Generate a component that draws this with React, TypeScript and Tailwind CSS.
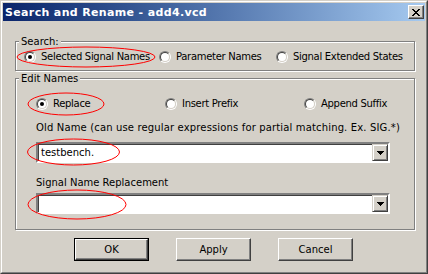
import React from 'react';

const font = { fontFamily: '"DejaVu Sans", Tahoma, sans-serif' };

const Radio = ({ checked = false }: { checked?: boolean }) => (
  <span className="w-[12px] h-[12px] shrink-0 rounded-full border border-t-[#808080] border-l-[#808080] border-r-white border-b-white flex">
    <span className="flex-1 rounded-full border border-t-[#404040] border-l-[#404040] border-r-[#d4d0c8] border-b-[#d4d0c8] bg-white flex items-center justify-center">
      {checked && <span className="w-[4px] h-[4px] rounded-full bg-black" />}
    </span>
  </span>
);

const RadioItem = ({ label, checked, className }: { label: string; checked?: boolean; className: string }) => (
  <div className={`flex items-center gap-[5px] h-[13px] ${className}`}>
    <Radio checked={checked} />
    <span className="leading-[13px] whitespace-nowrap tracking-[-0.3px]">{label}</span>
  </div>
);

const Combo = ({ value }: { value: string }) => (
  <div className="w-[354px] h-[21px] flex border-2 border-t-[#808080] border-l-[#808080] border-r-white border-b-white bg-white">
    <div className="flex-1 flex shadow-[inset_1px_1px_0_#404040]">
      <div className="flex-1 flex items-center pl-[3px] leading-[13px]">{value}</div>
      <div className="w-[16px] flex items-center justify-center bg-[#d4d0c8] border border-t-[#d4d0c8] border-l-[#d4d0c8] border-r-[#404040] border-b-[#404040] shadow-[inset_1px_1px_0_#fff,inset_-1px_-1px_0_#808080]">
        <svg width="7" height="4" viewBox="0 0 7 4">
          <path d="M0 0h7v1h-1v1h-1v1h-1v1h-1v-1h-1v-1h-1v-1h-1z" fill="#000" />
        </svg>
      </div>
    </div>
  </div>
);

const Button = ({ label, isDefault }: { label: string; isDefault?: boolean }) => (
  <button
    className={`w-[75px] h-[23px] flex ${isDefault ? 'border border-black' : ''}`}
  >
    <span className="flex-1 flex items-center justify-center bg-[#d4d0c8] border border-t-white border-l-white border-r-[#404040] border-b-[#404040] shadow-[inset_-1px_-1px_0_#808080] leading-[13px]">
      {label}
    </span>
  </button>
);

const Legend = ({ text }: { text: string }) => (
  <span className="self-start ml-[3px] -mt-[7px] px-[2px] h-[13px] leading-[13px] bg-[#d4d0c8]">{text}</span>
);

const App = () => {
  return (
    <div style={font} className="w-[428px] h-[274px] relative text-[10px] text-black select-none">
      <div className="w-full h-full flex border border-t-[#d4d0c8] border-l-[#d4d0c8] border-r-[#404040] border-b-[#404040]">
        <div className="flex-1 flex flex-col p-[1px] bg-[#d4d0c8] border border-t-white border-l-white border-r-[#808080] border-b-[#808080]">
          {/* title bar */}
          <div className="h-[18px] flex items-center justify-between pl-[2px] pr-[1px] bg-linear-to-r from-[#0a246a] to-[#a6caf0]">
            <span className="text-white font-bold text-[11px] leading-[13px] tracking-[0.35px]">Search and Rename - add4.vcd</span>
            <div className="w-[16px] h-[14px] flex bg-[#d4d0c8] border border-t-white border-l-white border-r-[#404040] border-b-[#404040]">
              <div className="flex-1 flex items-center justify-center shadow-[inset_-1px_-1px_0_#808080]">
                <svg width="8" height="7" viewBox="0 0 8 7">
                  <path
                    d="M0 0h2v1h1v1h2v-1h1v-1h2v1h-1v1h-1v1h-1v1h1v1h1v1h1v1h-2v-1h-1v-1h-2v1h-1v1h-2v-1h1v-1h1v-1h1v-1h-1v-1h-1v-1h-1z"
                    fill="#000"
                  />
                </svg>
              </div>
            </div>
          </div>

          {/* body */}
          <div className="flex flex-col pl-[12px]">
            <div className="mt-[20px] w-[400px] h-[30px] flex flex-col border border-[#808080] shadow-[inset_1px_1px_0_#fff,1px_1px_0_#fff]">
              <Legend text="Search:" />
              <div className="mt-[2px] flex pl-[8px]">
                <RadioItem label="Selected Signal Names" checked className="w-[135px]" />
                <RadioItem label="Parameter Names" className="w-[117px]" />
                <RadioItem label="Signal Extended States" className="" />
              </div>
            </div>

            <div className="mt-[7px] w-[400px] h-[152px] flex flex-col border border-[#808080] shadow-[inset_1px_1px_0_#fff,1px_1px_0_#fff]">
              <Legend text="Edit Names" />
              <div className="mt-[12px] flex pl-[20px]">
                <RadioItem label="Replace" checked className="w-[129px]" />
                <RadioItem label="Insert Prefix" className="w-[139px]" />
                <RadioItem label="Append Suffix" className="" />
              </div>
              <div className="mt-[11px] pl-[20px] h-[13px] leading-[13px] whitespace-nowrap tracking-[0.15px]">
                Old Name (can use regular expressions for partial matching. Ex. SIG.*)
              </div>
              <div className="mt-[8px] pl-[20px]">
                <Combo value="testbench." />
              </div>
              <div className="mt-[13px] pl-[20px] h-[13px] leading-[13px]">Signal Name Replacement</div>
              <div className="mt-[4px] pl-[20px]">
                <Combo value="" />
              </div>
            </div>
          </div>

          <div className="mt-[8px] flex justify-center gap-[27px] pr-[1px]">
            <Button label="OK" isDefault />
            <Button label="Apply" />
            <Button label="Cancel" />
          </div>
        </div>
      </div>

      {/* annotation marks */}
      <svg className="absolute inset-0 pointer-events-none" width="428" height="274" viewBox="0 0 428 274">
        <g fill="none" stroke="#ff0000" strokeWidth="1">
          <ellipse cx="86" cy="57" rx="69" ry="10" />
          <ellipse cx="66" cy="104" rx="38" ry="11" />
          <ellipse cx="73.5" cy="152" rx="46" ry="13" />
          <ellipse cx="77" cy="204.5" rx="49" ry="14.5" />
        </g>
      </svg>
    </div>
  );
};

export default App;
